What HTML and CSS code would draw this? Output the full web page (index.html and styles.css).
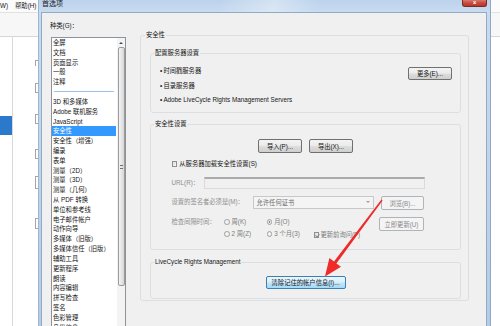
FILE: index.html
```html
<!DOCTYPE html>
<html lang="zh-CN">
<head>
<meta charset="utf-8">
<title>首选项</title>
<link rel="stylesheet" href="styles.css">
</head>
<body>
<div class="screen">
  <div class="app">
    <div class="app-menubar"><span>W)</span><span>帮助(H)</span></div>
    <div class="app-toolbar"></div>
    <div class="app-content">
      <div class="app-nav"><div class="app-nav-sel"></div></div>
      <div class="app-marks">
        <i class="mark m1"></i><i class="mark m2"></i><i class="mark m3"></i>
        <i class="mark m4"></i><i class="mark m5"></i><i class="mark m6"></i>
      </div>
    </div>
  </div>

  <div class="dialog">
    <div class="titlebar">
      <span class="title">首选项</span>
      <span class="close">x</span>
    </div>
    <div class="client">
      <div class="cat-col">
        <div class="cat-label">种类(G)：</div>
        <div class="listbox">
          <ul class="items">
            <li>全屏</li>
            <li>文档</li>
            <li>页面显示</li>
            <li>一般</li>
            <li>注释</li>
            <li class="sep"><span></span></li>
            <li>3D 和多媒体</li>
            <li>Adobe 联机服务</li>
            <li>JavaScript</li>
            <li class="sel">安全性</li>
            <li>安全性（增强）</li>
            <li>编录</li>
            <li>表单</li>
            <li>测量（2D）</li>
            <li>测量（3D）</li>
            <li>测量（几何）</li>
            <li>从 PDF 转换</li>
            <li>单位和参考线</li>
            <li>电子邮件帐户</li>
            <li>动作向导</li>
            <li>多媒体（旧版）</li>
            <li>多媒体信任（旧版）</li>
            <li>辅助工具</li>
            <li>更新程序</li>
            <li>朗读</li>
            <li>内容编辑</li>
            <li>拼写检查</li>
            <li>签名</li>
            <li>色彩管理</li>
            <li>身份信息</li>
          </ul>
          <div class="vscroll">
            <div class="vs-up"><span class="tri-up"></span></div>
            <div class="vs-thumb"><span class="grip"></span></div>
          </div>
        </div>
      </div>

      <div class="pane">
        <fieldset class="group outer">
          <legend class="outer-legend">安全性</legend>
          <div class="outer-body">
            <fieldset class="group g1">
              <legend>配置服务器设置</legend>
              <div class="g1-body">
                <ul class="bullets">
                  <li><span class="dot">•</span>时间戳服务器</li>
                  <li><span class="dot">•</span>目录服务器</li>
                  <li><span class="dot">•</span>Adobe LiveCycle Rights Management Servers</li>
                </ul>
                <button class="btn btn-more">更多(E)...</button>
              </div>
            </fieldset>

            <fieldset class="group g2">
              <legend>安全性设置</legend>
              <div class="g2-body">
                <div class="btn-row">
                  <button class="btn btn-io">导入(P)...</button>
                  <button class="btn btn-io">导出(X)...</button>
                </div>
                <div class="check-row">
                  <span class="checkbox"></span>
                  <span>从服务器加载安全性设置(S)</span>
                </div>
                <div class="url-row">
                  <span class="lbl lbl-url dis">URL(R)：</span>
                  <span class="input"></span>
                </div>
                <div class="signer-row">
                  <span class="lbl lbl-signer dis">设置的签名者必须是(M)：</span>
                  <span class="combo"><span class="combo-text">允许任何证书</span><span class="combo-arrow"></span></span>
                  <button class="btn btn-dis btn-browse">浏览(B)...</button>
                </div>
                <div class="interval">
                  <span class="lbl dis iv-label">检查间隔时间：</span>
                  <span class="opt iv-r1c1"><span class="radio"></span>周(K)</span>
                  <span class="opt iv-r1c2"><span class="radio on"></span>月(O)</span>
                  <button class="btn btn-dis btn-now">立即更新(U)</button>
                  <span class="opt iv-r2c1"><span class="radio"></span>2 周(Z)</span>
                  <span class="opt iv-r2c2"><span class="radio"></span>3 个月(3)</span>
                  <span class="opt iv-r2c3"><span class="checkbox checked"></span>更新前询问(F)</span>
                </div>
              </div>
            </fieldset>

            <fieldset class="group g3">
              <legend>LiveCycle Rights Management</legend>
              <div class="g3-body">
                <button class="btn btn-hot">清除记住的帐户信息(I)...</button>
              </div>
            </fieldset>
          </div>
        </fieldset>
      </div>
    </div>
  </div>

  <svg class="arrow" width="500" height="326" viewBox="0 0 500 326">
    <polygon points="325,276.5 329.4,258 334,261.6 381.4,199.6 382.6,200.4 336.4,263.4 341,266.8" fill="#ee2b28"/>
  </svg>
</div>
</body>
</html>
```

FILE: styles.css
```css
* { box-sizing: border-box; }
html, body { margin: 0; padding: 0; }
body {
  width: 500px;
  height: 326px;
  overflow: hidden;
  background: #fff;
  font-family: "Liberation Sans", "Noto Sans CJK SC", sans-serif;
  font-size: 6.3px;
  color: #151515;
}
.screen { position: relative; width: 500px; height: 326px; overflow: hidden; background: #fff; }

/* ---------- background application ---------- */
.app { display: flex; flex-direction: column; height: 100%; }
.app-menubar {
  height: 13px;
  display: flex;
  align-items: center;
  gap: 7px;
  line-height: 8px;
  background: #fbfbfb;
  border-bottom: 1px solid #e2e2e2;
}
.app-toolbar { height: 24px; background: #f7f7f7; border-bottom: 1px solid #d6d6d6; }
.app-content { flex: 1; display: flex; }
.app-nav { width: 13px; border-right: 1px solid #d8d8d8; padding-top: 79px; }
.app-nav-sel { height: 19px; background: #2a79cb; }
.app-marks { display: flex; flex-direction: column; padding-left: 22px; }
.mark { display: block; width: 3px; border: 1px solid #a4a4a4; border-right: none; }
.m1 { margin-top: 23px; height: 6px; border-bottom: none; }
.m2 { margin-top: 17px; height: 10px; }
.m3 { margin-top: 21px; height: 10px; }
.m4 { margin-top: 25px; height: 10px; }
.m5 { margin-top: 17px; height: 13px; }
.m6 { margin-top: 29px; height: 11px; }

/* ---------- dialog window ---------- */
.dialog {
  position: absolute;
  left: 38px;
  top: 0;
  width: 453px;
  height: 340px;
  display: flex;
  flex-direction: column;
  background: linear-gradient(180deg, #c9dbef 0%, #bed3ea 60%, #b3cbe5 100%);
  border-left: 1px solid #9db5d0;
  border-right: 1px solid #8ea8c6;
}
.titlebar {
  height: 12px;
  display: flex;
  align-items: flex-start;
  padding: 0 3px 0 3px;
  background:
    linear-gradient(100deg, rgba(255,255,255,0) 40%, rgba(255,255,255,0.35) 52%, rgba(255,255,255,0) 62%),
    linear-gradient(180deg, #bcd3ec 0%, #c8dbf0 100%);
}
.title { font-size: 7px; line-height: 7px; color: #1b1b1b; }
.close {
  margin-left: auto;
  width: 25px;
  height: 7px;
  border: 1px solid #7b2a22;
  border-top: none;
  border-radius: 0 0 3px 3px;
  background: linear-gradient(180deg, #d9796e 0%, #c7493c 50%, #b7382b 100%);
  color: #fff;
  font-family: "DejaVu Sans", sans-serif;
  font-weight: bold;
  font-size: 5px;
  line-height: 5px;
  text-align: center;
}
.client {
  flex: 1;
  margin: 0 3px 0 2px;
  background: #f0f0f0;
  border: 1px solid #93aac3;
  border-bottom: none;
  display: flex;
  align-items: flex-start;
}

/* ---------- category list ---------- */
.cat-col { width: 84px; padding-left: 8px; display: flex; flex-direction: column; }
.cat-label { padding-top: 8px; line-height: 9px; height: 24px; }
.listbox {
  margin-left: 1px;
  width: 75px;
  height: 300px;
  background: #fff;
  border: 1px solid #8e939b;
  display: flex;
  gap: 1px;
}
.items { list-style: none; margin: 0; padding: 0; width: 64px; }
.items li { height: 9.82px; line-height: 9.82px; padding-left: 1px; white-space: nowrap; }
.items li.sel { background: #3399ff; color: #fff; }
.items li.sep { display: flex; align-items: center; padding: 0 2px; }
.items li.sep span { display: block; width: 100%; height: 1px; background: #9dc0e6; }
.vscroll { width: 8px; display: flex; flex-direction: column; background: #f3f3f3; }
.vs-up { height: 9px; display: flex; align-items: center; justify-content: center; }
.tri-up { width: 0; height: 0; border-left: 2px solid transparent; border-right: 2px solid transparent; border-bottom: 2px solid #4a4a4a; }
.vs-thumb {
  height: 239px;
  margin: 0 0.5px;
  border: 1px solid #9b9b9b;
  border-radius: 2px;
  background: linear-gradient(90deg, #f4f4f4 0%, #e6e6e6 50%, #d6d6d6 100%);
  display: flex;
  align-items: center;
  justify-content: center;
}
.grip { width: 3px; height: 4px; border-top: 1px solid #6f6f6f; border-bottom: 1px solid #6f6f6f; background: linear-gradient(180deg, transparent 40%, #6f6f6f 40%, #6f6f6f 65%, transparent 65%); }

/* ---------- right pane ---------- */
.pane { margin-left: 14px; margin-top: 17.5px; width: 329px; }
fieldset.group {
  margin: 0;
  padding: 0;
  min-inline-size: 0;
  border: 1px solid #dcdfe2;
  border-radius: 3px;
}
fieldset.group legend { padding: 0 1px 1px; margin-left: 3px; line-height: 8px; }
fieldset.group .outer-legend { margin-left: 4px; }
.outer-body { padding: 0 7px 1px 9px; }
fieldset.g1 { margin-top: 9.5px; }
.g1-body { display: flex; justify-content: space-between; align-items: flex-start; padding: 9px 8px 8px 9px; }
.bullets { list-style: none; margin: 0; padding: 0; display: flex; flex-direction: column; gap: 6.5px; }
.bullets li { line-height: 8px; white-space: nowrap; }
.dot { margin-right: 1.2px; }

.btn {
  font-family: inherit;
  font-size: 6.3px;
  color: #151515;
  padding: 0;
  height: 13px;
  border: 1px solid #707070;
  border-radius: 2px;
  background: linear-gradient(180deg, #f3f3f3 0%, #ebebeb 48%, #dddddd 52%, #cfcfcf 100%);
  white-space: nowrap;
}
.btn-more { width: 44px; }
.btn-dis { color: #8a8a8a; border-color: #b0b4b7; background: #f4f4f4; }
.btn-hot {
  width: 80px;
  border-color: #3c7fb1;
  background: linear-gradient(180deg, #eaf6fd 0%, #d9f0fc 48%, #bee6fd 52%, #a7d9f5 100%);
}

fieldset.g2 { margin-top: 7px; }
.g2-body { padding: 10px 35px 9px 20.5px; display: flex; flex-direction: column; }
.btn-row { display: flex; justify-content: center; gap: 7px; margin-left: -20.5px; margin-right: -35px; }
.btn-io { width: 44px; height: 14px; }
.check-row { margin-top: 7px; display: flex; align-items: center; gap: 2.3px; line-height: 8px; }
.checkbox {
  display: inline-block;
  width: 5.5px;
  height: 5.5px;
  border: 1px solid #8e8f8f;
  background: linear-gradient(135deg, #dcdcdc 0%, #fbfbfb 100%);
  position: relative;
  flex: none;
}
.checkbox.checked::after {
  content: "";
  position: absolute;
  left: 1px;
  top: 0;
  width: 1.5px;
  height: 3px;
  border: solid #8a8a8a;
  border-width: 0 1px 1px 0;
  transform: rotate(40deg);
}
.dis { color: #8f8f8f; }
.lbl { line-height: 8px; white-space: nowrap; }
.url-row { margin-top: 8.5px; display: flex; align-items: center; }
.lbl-url { width: 32.5px; }
.input { flex: 1; height: 12.5px; border: 1px solid #dadada; border-top: 2px solid #ababab; background: #f0f0f0; }
.signer-row { margin-top: 7px; display: flex; align-items: flex-start; }
.lbl-signer { width: 81.5px; line-height: 12.5px; }
.combo {
  width: 121px;
  height: 12.5px;
  border: 1px solid #c8c8c8;
  background: #f4f4f4;
  display: flex;
  align-items: center;
  padding-left: 2.5px;
}
.combo-text { color: #6a6a6a; flex: 1; }
.combo-arrow { width: 0; height: 0; margin-right: 3px; border-left: 2px solid transparent; border-right: 2px solid transparent; border-top: 2px solid #a0a0a0; }
.btn-browse { width: 43px; height: 14px; margin-left: 7px; }

.interval {
  margin-top: 6px;
  display: grid;
  grid-template-columns: 52.5px 42.7px 47.3px 65px 45px;
  grid-template-rows: 12px 12px;
  align-items: center;
}
.iv-label { grid-column: 1; grid-row: 1; }
.opt { display: flex; align-items: center; gap: 2px; line-height: 8px; white-space: nowrap; color: #7c7c7c; }
.iv-r1c1 { grid-column: 2; grid-row: 1; }
.iv-r1c2 { grid-column: 3; grid-row: 1; }
.iv-r2c1 { grid-column: 2; grid-row: 2; }
.iv-r2c2 { grid-column: 3; grid-row: 2; }
.iv-r2c3 { grid-column: 4; grid-row: 2; margin-top: 2px; gap: 1px; }
.btn-now { grid-column: 5; grid-row: 1 / span 2; align-self: start; margin-top: 1px; width: 45px; height: 14px; }
.radio {
  display: inline-block;
  width: 5.5px;
  height: 5.5px;
  border-radius: 50%;
  border: 1px solid #a2a2a2;
  background: radial-gradient(circle, #fafafa 0%, #e2e2e2 100%);
  flex: none;
}
.radio.on { background: radial-gradient(circle, #7d7d7d 0%, #8a8a8a 35%, #e6e6e6 45%, #f4f4f4 100%); }

fieldset.g3 { margin-top: 8px; }
.g3-body { display: flex; justify-content: center; padding: 9px 0 9px; }

/* annotation overlay */
.arrow { position: absolute; left: 0; top: 0; pointer-events: none; }
```
